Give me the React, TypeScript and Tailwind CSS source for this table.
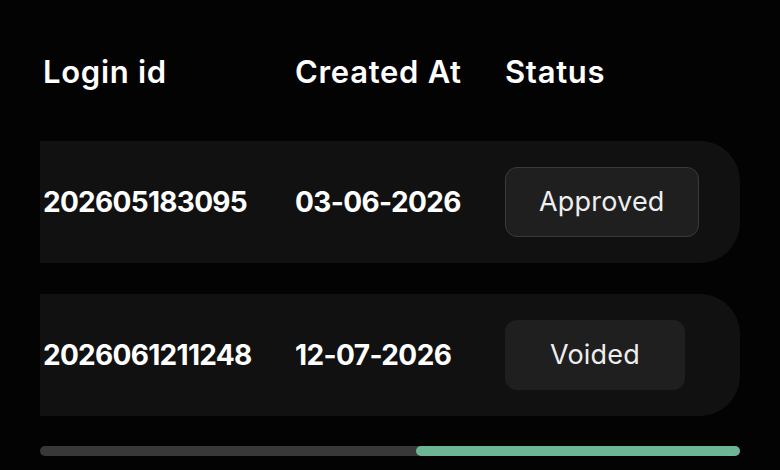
import React from "react";

const rows = [
  { id: "202605183095", created: "03-06-2026", status: "Approved", bordered: true },
  { id: "2026061211248", created: "12-07-2026", status: "Voided", bordered: false },
];

export default function App() {
  return (
    <div
      className="w-[780px] h-[470px] bg-[#030303] text-white overflow-hidden"
      style={{ fontFamily: "Inter, 'Noto Sans', sans-serif" }}
    >
      <div className="pl-[40px] pr-[40px]">
        <div className="flex items-center h-[58px] mt-[43px] pl-[3px] text-[31px] font-semibold tracking-[0.7px]">
          <div className="w-[252px]">Login id</div>
          <div className="w-[210px]">Created At</div>
          <div>Status</div>
        </div>

        <div className="mt-[40px] flex flex-col gap-[31px]">
          {rows.map((r) => (
            <div
              key={r.id}
              className="flex items-center h-[122px] pl-[3px] bg-[#111111] rounded-r-[40px]"
            >
              <div className="w-[252px] text-[28px] font-bold tracking-[-0.7px]">{r.id}</div>
              <div className="w-[210px] text-[28px] font-bold tracking-[-0.6px]">{r.created}</div>
              <div
                className={
                  r.bordered
                    ? "h-[70px] px-[33px] flex items-center rounded-[12px] bg-[#1f1f1f] border border-[#3a3a3a] text-[27px] tracking-[0.2px] text-[#eeeeee]"
                    : "h-[70px] px-[45px] flex items-center rounded-[12px] bg-[#1f1f1f] text-[27px] tracking-[0.2px] text-[#eeeeee]"
                }
              >
                {r.status}
              </div>
            </div>
          ))}
        </div>

        <div className="mt-[30px] h-[10px] rounded-full bg-[#383838] flex justify-end">
          <div className="w-[324px] h-full rounded-full bg-[#6cb595]" />
        </div>
      </div>
    </div>
  );
}
